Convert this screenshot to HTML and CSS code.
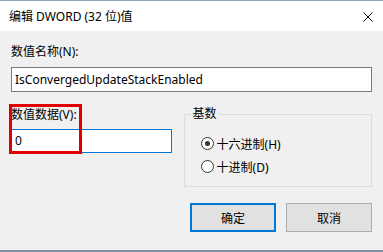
FILE: index.html
```html
<!DOCTYPE html>
<html>
<head>
<meta charset="utf-8">
<link rel="stylesheet" href="styles.css">
</head>
<body>
<div class="window">
  <div class="titlebar">
    <span class="title">编辑 DWORD (32 位)值</span>
    <svg class="close" width="10" height="10" viewBox="0 0 10 10"><path d="M0.5 0.5L9.5 9.5M9.5 0.5L0.5 9.5" stroke="#111" stroke-width="1" fill="none"/></svg>
  </div>
  <div class="content">
    <div class="label">数值名称(N):</div>
    <div class="field name">IsConvergedUpdateStackEnabled</div>
    <div class="row">
      <div class="left">
        <div class="label">数值数据(V):</div>
        <div class="field value">0</div>
        <div class="highlight"></div>
      </div>
      <fieldset class="group">
        <legend>基数</legend>
        <div class="radio"><span class="dot checked"></span>十六进制(H)</div>
        <div class="radio"><span class="dot"></span>十进制(D)</div>
      </fieldset>
    </div>
    <div class="buttons">
      <div class="btn default">确定</div>
      <div class="btn">取消</div>
    </div>
  </div>
</div>
</body>
</html>
```
FILE: styles.css
```css
html, body {
  margin: 0;
  padding: 0;
  background: #f0f0f0;
}
body {
  width: 383px;
  height: 252px;
  overflow: hidden;
  font-family: "Noto Sans", "Noto Sans CJK SC", sans-serif;
  font-size: 12px;
  color: #000;
}
.window {
  height: 252px;
  border-top: 1px solid #8ea3b8;
  border-bottom: 2px solid #7d8fa2;
  box-sizing: border-box;
  display: flex;
  flex-direction: column;
}
.titlebar {
  height: 30px;
  background: #fff;
  display: flex;
  align-items: center;
  justify-content: space-between;
  padding: 0 10px 0 9px;
  flex: none;
}
.title {
  font-size: 12px;
}
.close {
  margin-top: 1px;
}
.content {
  padding: 13px 11px 0 11px;
  flex: 1;
}
.label {
  line-height: 16px;
}
.field {
  background: #fff;
  border: 1px solid #7a7a7a;
  height: 25px;
  box-sizing: border-box;
  line-height: 23px;
  padding-left: 3px;
  margin-top: 7px;
}
.name {
  width: 361px;
}
.row {
  display: flex;
  margin-top: 15px;
  gap: 12px;
}
.left {
  position: relative;
  width: 161px;
}
.value {
  border-color: #0078d7;
  margin-top: 6px;
  height: 24px;
  line-height: 22px;
}
.highlight {
  position: absolute;
  left: -2px;
  top: -3px;
  width: 73px;
  height: 50px;
  border: 3px solid #e00000;
  box-sizing: border-box;
}
.group {
  margin: 0;
  padding: 11px 0 0 0;
  border: 1px solid #dcdcdc;
  width: 189px;
  height: 80px;
  box-sizing: border-box;
}
.group legend {
  padding: 0 2px;
  margin-left: 6px;
  line-height: 14px;
}
.radio {
  display: flex;
  align-items: center;
  height: 23px;
  margin-left: 16px;
}
.dot {
  width: 11px;
  height: 11px;
  border: 1px solid #333;
  border-radius: 50%;
  margin-right: 3px;
  position: relative;
  background: #fff;
}
.dot.checked::after {
  content: "";
  position: absolute;
  left: 3px;
  top: 3px;
  width: 5px;
  height: 5px;
  border-radius: 50%;
  background: #333;
}
.buttons {
  display: flex;
  justify-content: flex-end;
  gap: 10px;
  margin-top: 16px;
}
.btn {
  width: 86px;
  height: 29px;
  box-sizing: border-box;
  border: 1px solid #adadad;
  background: #e1e1e1;
  display: flex;
  align-items: center;
  justify-content: center;
}
.btn.default {
  border: 2px solid #0078d7;
}
```
